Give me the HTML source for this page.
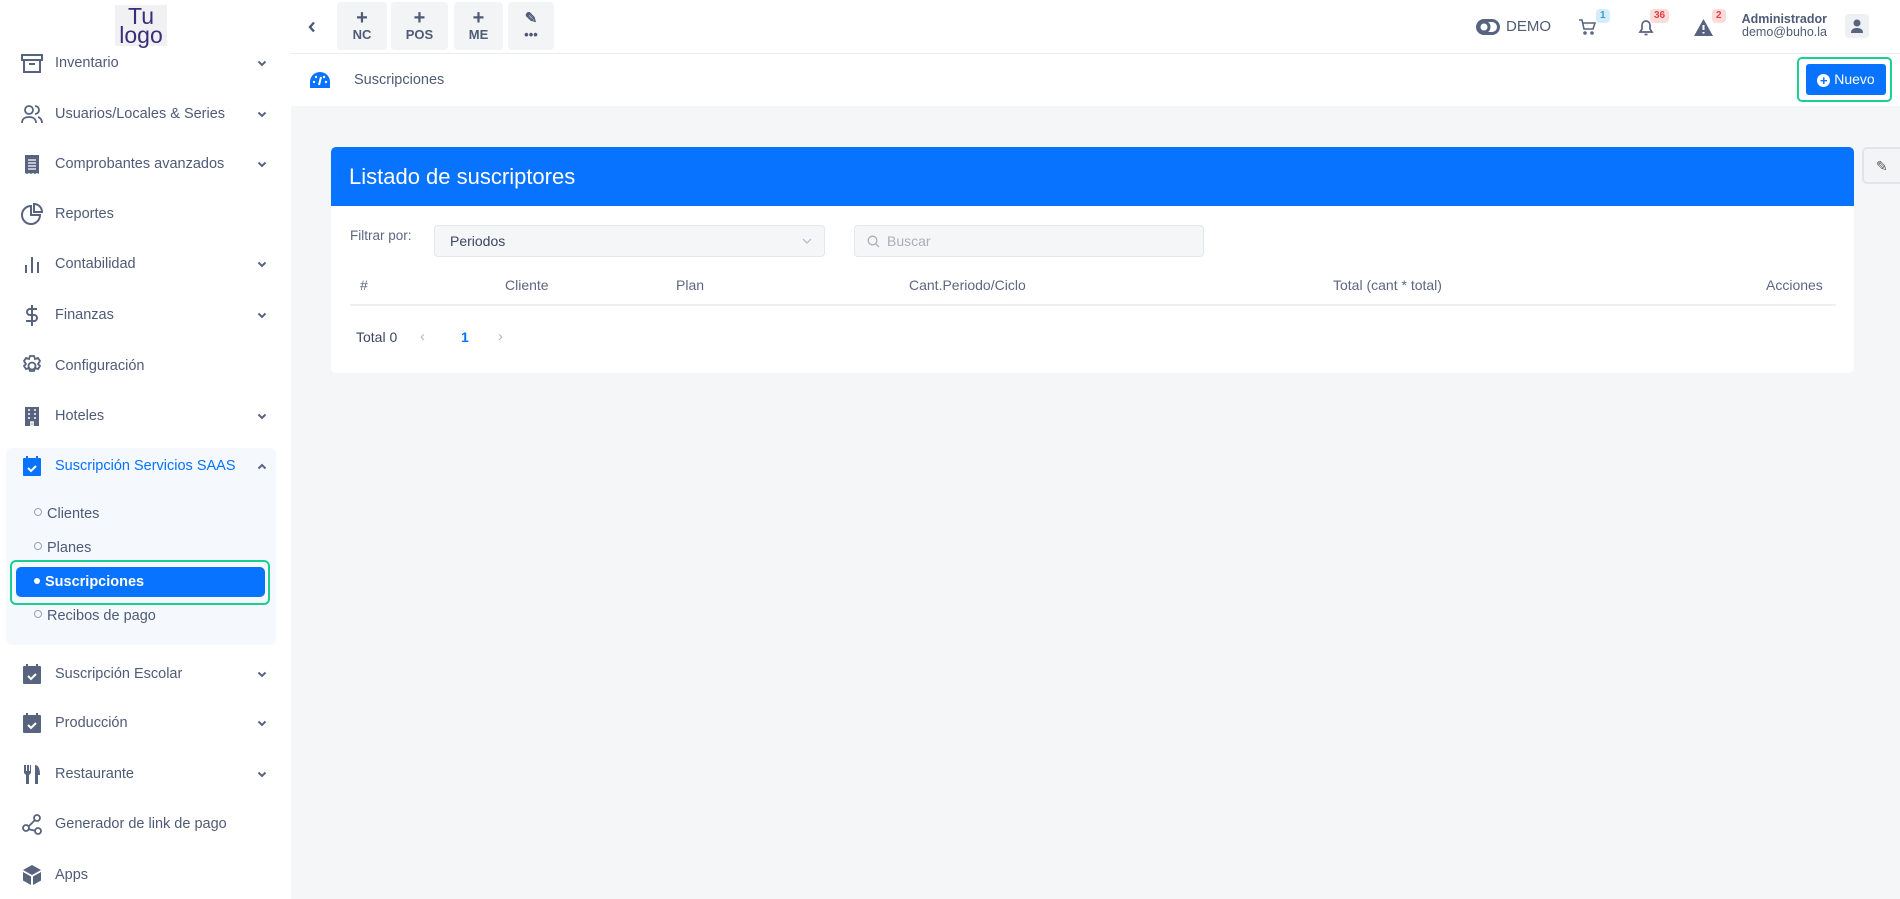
<!DOCTYPE html>
<html><head><meta charset="utf-8"><style>
*{box-sizing:border-box;margin:0;padding:0}
body{width:1900px;height:899px;overflow:hidden;background:#f5f6f8;font-family:"Liberation Sans",sans-serif;color:#4f5b76;position:relative}
.abs{position:absolute}
#side{left:0;top:0;width:291px;height:899px;background:#fff}
.logo{left:115px;top:5px;width:52px;height:41px;background:#f1f1f3;color:#3b2d7a;font-size:23px;line-height:19px;text-align:center;padding-top:2px}
.nav{position:absolute;left:0;width:291px;height:30px;font-size:14.5px;line-height:30px}
.nav .ic{position:absolute;left:21px;top:4px;width:22px;height:22px}
.nav .tx{position:absolute;left:55px}
.nav .ch{position:absolute;left:257px;top:12px;width:10px;height:7px}
.sub{position:absolute;left:34px;font-size:14.5px;height:30px;line-height:30px}
.sub:before{content:"";display:inline-block;width:6px;height:6px;border:1px solid #9aa3b4;border-radius:50%;margin-right:5px;vertical-align:2px}
svg{display:block}
#top{left:291px;top:0;width:1609px;height:54px;background:#fff;border-bottom:1px solid #e9ebef}
.tb{position:absolute;top:2px;height:48px;background:#f3f4f6;border-radius:4px;text-align:center;font-weight:bold;font-size:13px;color:#4f5b76;line-height:16px;padding-top:8px}
.tb b{display:block;font-size:20px;line-height:17px}
.badge{position:absolute;font-size:10px;font-weight:bold;padding:1px 4px;border-radius:4px;line-height:12px}
#sub{left:291px;top:54px;width:1609px;height:52px;background:#fff}
.card{left:331px;top:147px;width:1523px;height:226px;background:#fff;border-radius:5px;overflow:hidden}
.card .hd{height:59px;background:#0773ff;color:#fff;font-size:22px;line-height:59px;padding-left:18px}
.th{position:absolute;top:277px;font-size:14px;color:#5d6780}
</style></head><body>
<svg width="0" height="0" style="position:absolute"><defs><symbol id="cv" viewBox="0 0 10 7"><path d="M1.5 1.5L5 5l3.5-3.5" fill="none" stroke="#58647f" stroke-width="2"/></symbol></defs></svg>
<div id="side" class="abs">
 <div class="logo abs">Tu<br>logo</div>
 <div class="nav" style="top:48px"><svg class="ic" viewBox="0 0 22 22" fill="none" stroke="#58647f" stroke-width="2"><rect x="1" y="3" width="20" height="5"/><path d="M3 8v12h16V8M8 12h6"/></svg><span class="tx">Inventario</span><svg class="ch"><use href="#cv"/></svg></div>
 <div class="nav" style="top:99px"><svg class="ic" viewBox="0 0 22 22" fill="none" stroke="#58647f" stroke-width="1.8"><circle cx="8" cy="7" r="4"/><path d="M1 20c0-4 3-6 7-6s7 2 7 6M14 3a4 4 0 010 8M17 14c3 1 4 3 4 6"/></svg><span class="tx">Usuarios/Locales &amp; Series</span><svg class="ch"><use href="#cv"/></svg></div>
 <div class="nav" style="top:149px"><svg class="ic" viewBox="0 0 22 22"><path d="M4 2h14v19l-2-1-2 1-2-1-2 1-2-1-2 1-2-1z" fill="#58647f"/><path d="M7 7h8M7 10h8M7 13h8M7 16h8" stroke="#fff" stroke-width="1.3"/></svg><span class="tx">Comprobantes avanzados</span><svg class="ch"><use href="#cv"/></svg></div>
 <div class="nav" style="top:199px"><svg class="ic" viewBox="0 0 22 22" fill="none" stroke="#58647f" stroke-width="2"><path d="M10 3a9 9 0 109 9h-9z"/><path d="M13 1a8 8 0 018 8h-8z"/></svg><span class="tx">Reportes</span></div>
 <div class="nav" style="top:249px"><svg class="ic" viewBox="0 0 22 22" stroke="#58647f" stroke-width="2"><path d="M5 12v8M11 4v16M17 9v11"/></svg><span class="tx">Contabilidad</span><svg class="ch"><use href="#cv"/></svg></div>
 <div class="nav" style="top:300px"><svg class="ic" viewBox="0 0 22 22" fill="none" stroke="#58647f" stroke-width="2"><path d="M11 1v21M16 5h-7a3 3 0 000 6h4a3 3 0 010 6H5"/></svg><span class="tx">Finanzas</span><svg class="ch"><use href="#cv"/></svg></div>
 <div class="nav" style="top:351px"><svg class="ic" viewBox="0 0 22 22" fill="none" stroke="#58647f" stroke-width="1.8"><circle cx="11" cy="11" r="3.5"/><path d="M9 1h4l1 3 3-1 2 3-2 3 2 2-2 3-3-1-1 3H9l-1-3-3 1-2-3 2-2-2-3 2-3 3 1z"/></svg><span class="tx">Configuración</span></div>
 <div class="nav" style="top:401px"><svg class="ic" viewBox="0 0 22 22"><rect x="4" y="2" width="14" height="19" fill="#58647f"/><path d="M7 5h2M13 5h2M7 9h2M13 9h2M7 13h2M13 13h2M10 17h2v4h-2z" stroke="#fff" stroke-width="1.6"/></svg><span class="tx">Hoteles</span><svg class="ch"><use href="#cv"/></svg></div>
 <div class="abs" style="left:6px;top:448px;width:270px;height:197px;background:#f5f8fd;border-radius:6px"></div>
 <div class="nav" style="top:451px;color:#0773ff"><svg class="ic" viewBox="0 0 22 22"><rect x="2" y="3" width="18" height="18" rx="1" fill="#0773ff"/><path d="M6 1v4M16 1v4" stroke="#0773ff" stroke-width="2"/><path d="M7 13l3 3 5-5" stroke="#fff" stroke-width="2" fill="none"/></svg><span class="tx">Suscripción Servicios SAAS</span><svg class="ch" style="transform:rotate(180deg)"><use href="#cv"/></svg></div>
 <div class="sub" style="top:499px">Clientes</div>
 <div class="sub" style="top:533px">Planes</div>
 <div class="abs" style="left:10px;top:560px;width:260px;height:45px;border:2px solid #1ad08f;border-radius:6px"></div>
 <div class="abs" style="left:16px;top:567px;width:249px;height:30px;background:#0773ff;border-radius:5px;color:#fff;font-weight:bold;font-size:14.5px;line-height:30px;padding-left:18px"><span style="display:inline-block;width:6px;height:6px;background:#fff;border-radius:50%;margin-right:5px;vertical-align:2px"></span>Suscripciones</div>
 <div class="sub" style="top:601px">Recibos de pago</div>
 <div class="nav" style="top:659px"><svg class="ic" viewBox="0 0 22 22"><rect x="2" y="3" width="18" height="18" rx="1" fill="#58647f"/><path d="M6 1v4M16 1v4" stroke="#58647f" stroke-width="2"/><path d="M7 13l3 3 5-5" stroke="#fff" stroke-width="2" fill="none"/></svg><span class="tx">Suscripción Escolar</span><svg class="ch"><use href="#cv"/></svg></div>
 <div class="nav" style="top:708px"><svg class="ic" viewBox="0 0 22 22"><rect x="2" y="3" width="18" height="18" rx="1" fill="#58647f"/><path d="M6 1v4M16 1v4" stroke="#58647f" stroke-width="2"/><path d="M7 13l3 3 5-5" stroke="#fff" stroke-width="2" fill="none"/></svg><span class="tx">Producción</span><svg class="ch"><use href="#cv"/></svg></div>
 <div class="nav" style="top:759px"><svg class="ic" viewBox="0 0 22 22" fill="#58647f"><path d="M3 2h2v6h1V2h2v6h1V2h1v8l-2 2v9H5v-9L3 10z"/><path d="M14 2c4 0 5 5 5 10h-2v9h-3z"/></svg><span class="tx">Restaurante</span><svg class="ch"><use href="#cv"/></svg></div>
 <div class="nav" style="top:809px"><svg class="ic" viewBox="0 0 22 22" fill="none" stroke="#58647f" stroke-width="1.8"><circle cx="5" cy="15" r="3"/><circle cx="16" cy="5" r="3"/><circle cx="17" cy="18" r="3"/><path d="M7.5 13.5l6-6M7.8 16.2l6.5 1.5"/></svg><span class="tx">Generador de link de pago</span></div>
 <div class="nav" style="top:860px"><svg class="ic" viewBox="0 0 22 22" fill="#58647f"><path d="M11 1l9 5-9 5-9-5z"/><path d="M2 8l8 4.5V21l-8-4.5zM20 8l-8 4.5V21l8-4.5z"/></svg><span class="tx">Apps</span></div>
</div>
<div id="top" class="abs">
 <svg class="abs" style="left:17px;top:21px" width="8" height="12" viewBox="0 0 8 12"><path d="M6 1.5L2 6l4 4.5" fill="none" stroke="#4f5b76" stroke-width="2.4"/></svg>
 <div class="tb" style="left:46px;width:50px"><b>+</b>NC</div>
 <div class="tb" style="left:100px;width:57px"><b>+</b>POS</div>
 <div class="tb" style="left:163px;width:49px"><b>+</b>ME</div>
 <div class="tb" style="left:217px;width:46px"><b style="font-size:15px">&#9998;</b>•••</div>
 <svg class="abs" style="left:1185px;top:19px" width="24" height="16" viewBox="0 0 24 16" fill="none" stroke="#58647f" stroke-width="3"><rect x="1.5" y="1.5" width="21" height="13" rx="6.5"/><circle cx="8" cy="8" r="5"/></svg>
 <div class="abs" style="left:1215px;top:18px;font-size:15px">DEMO</div>
 <svg class="abs" style="left:1287px;top:18px" width="18" height="18" viewBox="0 0 18 18" fill="none" stroke="#58647f" stroke-width="1.6"><path d="M1 2h3l2 9h9l2-6H5"/><circle cx="7" cy="15" r="1"/><circle cx="14" cy="15" r="1"/></svg>
 <div class="badge" style="left:1305px;top:9px;background:#d7ecfb;color:#2d9cdb">1</div>
 <svg class="abs" style="left:1347px;top:18px" width="16" height="18" viewBox="0 0 16 18" fill="none" stroke="#58647f" stroke-width="1.7"><path d="M2 14h12l-2-3V7a4 4 0 00-8 0v4zM6.5 16.5h3"/></svg>
 <div class="badge" style="left:1359px;top:9px;background:#fbdcdc;color:#e53e3e">36</div>
 <svg class="abs" style="left:1403px;top:19px" width="19" height="17" viewBox="0 0 19 17"><path d="M9.5 0L19 17H0z" fill="#58647f"/><path d="M9.5 6v5M9.5 13v1.5" stroke="#fff" stroke-width="2"/></svg>
 <div class="badge" style="left:1421px;top:9px;background:#fbdcdc;color:#e53e3e">2</div>
 <div class="abs" style="left:1420px;top:13px;width:116px;text-align:right;font-size:12.5px;line-height:13px"><b>Administrador</b><br>demo@buho.la</div>
 <div class="abs" style="left:1554px;top:14px;width:24px;height:24px;background:#eef0f3;border-radius:4px"><svg width="24" height="24" viewBox="0 0 24 24" fill="#58647f"><circle cx="12" cy="9" r="3.5"/><path d="M6 19c0-4 3-5 6-5s6 1 6 5z"/></svg></div>
</div>
<div id="sub" class="abs">
 <svg class="abs" style="left:19px;top:18px" width="20" height="16" viewBox="0 0 20 16"><path d="M10 0a10 10 0 00-10 10v6h20v-6A10 10 0 0010 0z" fill="#0773ff"/><path d="M9 13l2-8" stroke="#fff" stroke-width="2"/><circle cx="4" cy="10" r="1.2" fill="#fff"/><circle cx="6" cy="5" r="1.2" fill="#fff"/><circle cx="14" cy="5" r="1.2" fill="#fff"/><circle cx="16" cy="10" r="1.2" fill="#fff"/></svg>
 <div class="abs" style="left:63px;top:18px;font-size:14.5px">Suscripciones</div>
 <div class="abs" style="left:1506px;top:3px;width:95px;height:45px;border:2px solid #1ad08f;border-radius:5px"></div>
 <div class="abs" style="left:1515px;top:10px;width:80px;height:31px;background:#0773ff;border-radius:3px;color:#fff;font-size:14px;line-height:31px;text-align:center"><span style="display:inline-block;width:13px;height:13px;background:#fff;border-radius:50%;color:#0773ff;font-size:13px;line-height:13px;font-weight:bold;vertical-align:-1px">+</span> Nuevo</div>
</div>
<div class="card abs"><div class="hd">Listado de suscriptores</div></div>
<div class="abs" style="left:1862px;top:147px;width:40px;height:37px;background:#f3f4f6;border:2px solid #e2e4e8;border-radius:5px 0 0 5px;color:#555;font-size:14px;padding:9px 0 0 12px">&#9998;</div>
<div class="abs" style="left:350px;top:228px;font-size:13.5px;color:#5d6780">Filtrar por:</div>
<div class="abs" style="left:434px;top:225px;width:391px;height:32px;background:#f5f6f8;border:1px solid #e5e7eb;border-radius:4px;font-size:14px;line-height:30px;padding-left:15px;color:#3b4660">Periodos<svg style="position:absolute;right:12px;top:12px" width="10" height="7" viewBox="0 0 10 7"><path d="M1 1l4 4 4-4" fill="none" stroke="#b0b6c2" stroke-width="1.2"/></svg></div>
<div class="abs" style="left:854px;top:225px;width:350px;height:32px;background:#f5f6f8;border:1px solid #e5e7eb;border-radius:4px;font-size:14px;line-height:30px;padding-left:32px;color:#a9afba"><svg style="position:absolute;left:12px;top:9px" width="13" height="13" viewBox="0 0 13 13" fill="none" stroke="#a9afba" stroke-width="1.3"><circle cx="5.5" cy="5.5" r="4.3"/><path d="M8.7 8.7L12 12"/></svg>Buscar</div>
<div class="th" style="left:360px">#</div>
<div class="th" style="left:505px">Cliente</div>
<div class="th" style="left:676px">Plan</div>
<div class="th" style="left:909px">Cant.Periodo/Ciclo</div>
<div class="th" style="left:1333px">Total (cant * total)</div>
<div class="th" style="left:1766px">Acciones</div>
<div class="abs" style="left:350px;top:304px;width:1486px;height:2px;background:#eef0f3"></div>
<div class="abs" style="left:356px;top:329px;font-size:14px;color:#3b4660">Total 0</div>
<div class="abs" style="left:420px;top:328px;font-size:15px;color:#b0b6c2">&#8249;</div>
<div class="abs" style="left:461px;top:329px;font-size:14px;color:#0773ff;font-weight:bold">1</div>
<div class="abs" style="left:498px;top:328px;font-size:15px;color:#b0b6c2">&#8250;</div>
</body></html>
